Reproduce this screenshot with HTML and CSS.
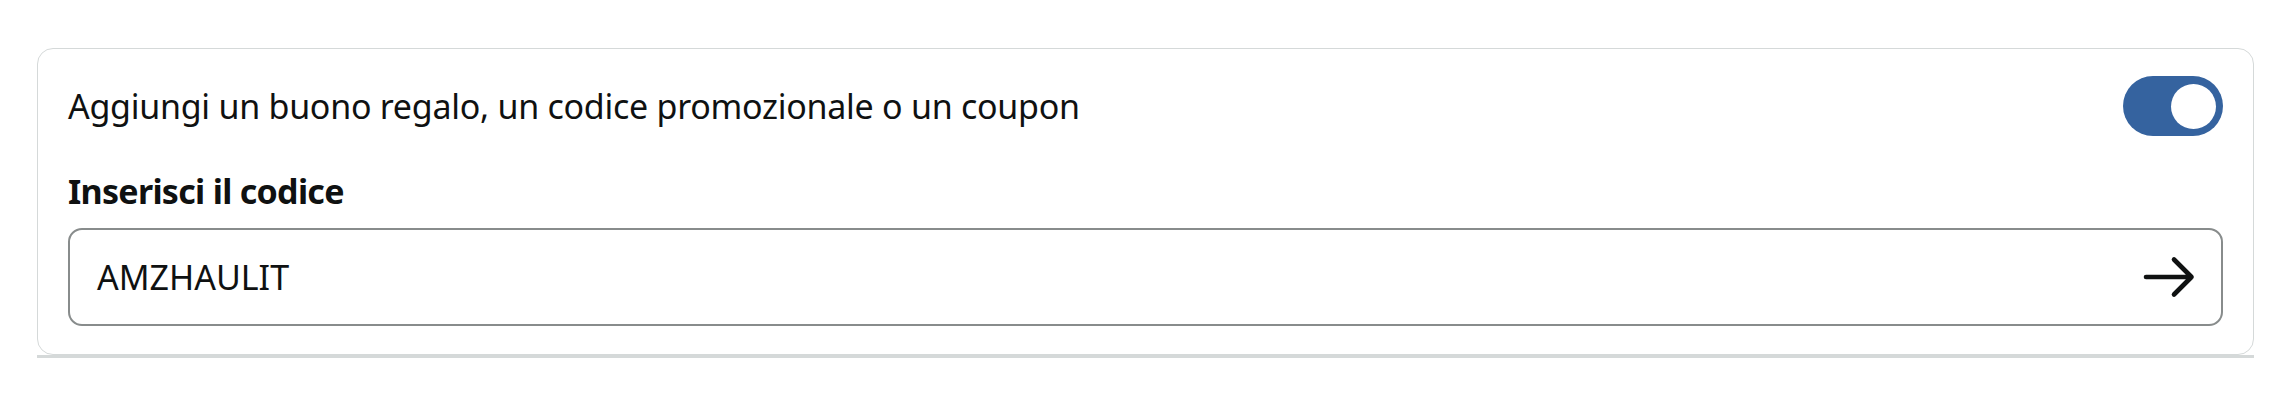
FILE: index.html
```html
<!DOCTYPE html>
<html lang="it">
<head>
<meta charset="utf-8">
<title>Codice promozionale</title>
<link rel="stylesheet" href="styles.css">
</head>
<body>
  <div class="wrap">
    <section class="card">
      <div class="row">
        <span class="row-text">Aggiungi un buono regalo, un codice promozionale o un coupon</span>
        <span class="toggle" role="switch" aria-checked="true"><span class="knob"></span></span>
      </div>
      <label class="label" for="code">Inserisci il codice</label>
      <div class="field">
        <span class="field-value" id="code">AMZHAULIT</span>
        <svg class="arrow" width="52" height="42" viewBox="0 0 52 42" aria-hidden="true">
          <path d="M3 21 H48.5 M31 3.5 L48.5 21 L31 38.5" fill="none" stroke="#0f1111" stroke-width="4.6" stroke-linecap="round" stroke-linejoin="round"/>
        </svg>
      </div>
    </section>
    <div class="divider"></div>
  </div>
</body>
</html>
```
FILE: styles.css
```css
html, body {
  margin: 0;
  padding: 0;
  background: #ffffff;
}
body {
  font-family: "Noto Sans", "Open Sans", "Liberation Sans", sans-serif;
  color: #0f1111;
}
.wrap {
  padding: 48px 21px 0 37px;
}
.card {
  border: 1px solid #d5d9d9;
  border-radius: 16px;
  padding: 27px 30px 28px 30px;
  background: #fff;
}
.row {
  display: flex;
  align-items: center;
  justify-content: space-between;
  height: 60px;
}
.row-text {
  font-size: 34px;
  line-height: 44px;
  letter-spacing: -0.27px;
}
.toggle {
  display: flex;
  align-items: center;
  justify-content: flex-end;
  width: 100px;
  height: 60px;
  box-sizing: border-box;
  padding-right: 7px;
  border-radius: 30px;
  background: #35639f;
}
.knob {
  display: block;
  width: 45px;
  height: 45px;
  border-radius: 50%;
  background: #ffffff;
}
.label {
  display: block;
  margin-top: 33px;
  font-size: 34px;
  line-height: 44px;
  font-weight: 700;
  letter-spacing: -0.7px;
}
.field {
  margin-top: 15px;
  height: 98px;
  box-sizing: border-box;
  border: 2px solid #888c8c;
  border-radius: 14px;
  padding: 0 26px 0 27px;
  display: flex;
  align-items: center;
  justify-content: space-between;
}
.field-value {
  font-size: 34px;
  line-height: 44px;
}
.arrow {
  display: block;
}
.divider {
  height: 3px;
  background: #d5d9d9;
}
```
